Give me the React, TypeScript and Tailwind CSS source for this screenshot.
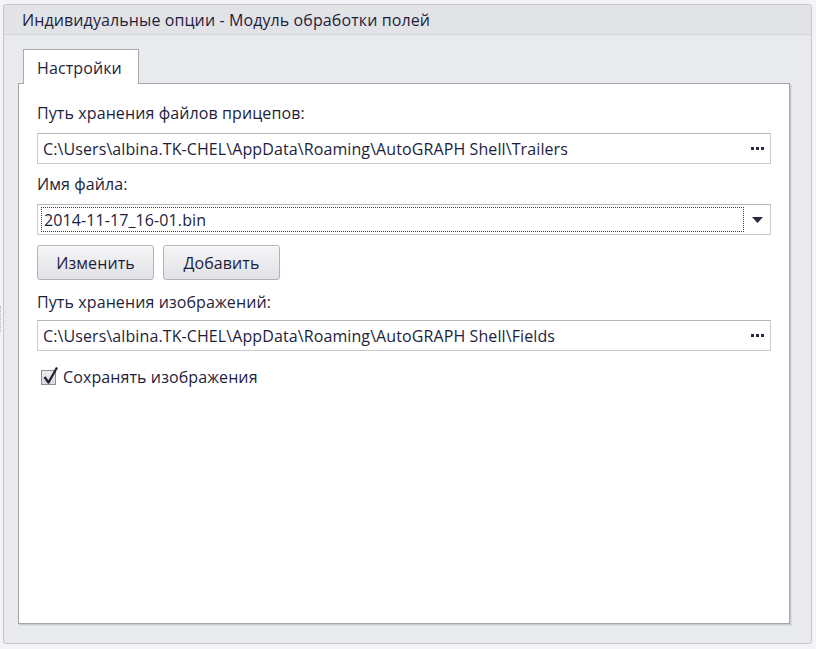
import React from "react";

const font = { fontFamily: '"Open Sans", "Noto Sans", sans-serif' };

function PathField({ value }: { value: string }) {
  return (
    <div className="flex items-center h-[31px] w-[734px] border border-[#c9cace] border-t-[#b4b5ba] bg-white pl-[5px] pr-[6px]">
      <span className="flex-1 truncate">{value}</span>
      <span className="flex gap-[2px] items-center">
        <span className="w-[3px] h-[3px] bg-[#2a2a40]" />
        <span className="w-[3px] h-[3px] bg-[#2a2a40]" />
        <span className="w-[3px] h-[3px] bg-[#2a2a40]" />
      </span>
    </div>
  );
}

function Button({ children }: { children: React.ReactNode }) {
  return (
    <button className="h-[35px] w-[117px] rounded-[3px] border border-[#b2b3b8] bg-gradient-to-b from-[#f5f5f7] to-[#e1e2e6] text-[#1e1e3c] shadow-[inset_0_1px_0_#ffffff]">
      {children}
    </button>
  );
}

export default function App() {
  return (
    <div className="relative w-[816px] h-[649px] bg-[#f4f4f6] pt-[4px] pl-[3px] text-[16px] tracking-[0.1px] text-[#1e1e3c]" style={font}>
      {/* splitter grip */}
      <div className="absolute left-0 top-[306px] h-[26px] w-[2px] border-l border-dotted border-[#b8b9be]" />

      <div className="w-[809px] h-[640px] rounded-[3px] border border-[#c6c7cc] bg-[#e9eaee] flex flex-col">
        {/* Header */}
        <div className="h-[30px] bg-[#e2e3e7] border-b border-[#d6d7db] flex items-center pl-[18px] rounded-t-[3px]">
          Индивидуальные опции - Модуль обработки полей
        </div>

        <div className="pl-[14px] pt-[14px] flex flex-col">
          {/* Tab */}
          <div className="relative z-10 -mb-px ml-[5px] w-[116px] h-[35px] border border-b-0 border-[#a8a9af] bg-white flex items-center pl-[13px] pt-[2px]">
            Настройки
          </div>

          {/* Page */}
          <div className="w-[772px] h-[541px] border border-[#a4a5ab] bg-white shadow-[1px_1px_0_#c9cace,2px_2px_0_#dcdde1] pl-[18px] pt-[16px] flex flex-col">
            <div className="h-[26px] flex items-center">Путь хранения файлов прицепов:</div>
            <div className="mt-[7px]">
              <PathField value="C:\Users\albina.TK-CHEL\AppData\Roaming\AutoGRAPH Shell\Trailers" />
            </div>

            <div className="mt-[7px] h-[26px] flex items-center">Имя файла:</div>
            <div className="mt-[7px] flex items-center h-[31px] w-[734px] border border-[#c9cace] border-t-[#b4b5ba] bg-white pl-[3px] pr-[7px]">
              <div className="flex-1 h-[25px] border border-dotted border-[#3a3a3a] flex items-center pl-[2px] mr-[8px]">
                2014-11-17_16-01.bin
              </div>
              <svg width="11" height="6" viewBox="0 0 11 6">
                <path d="M0 0 H11 L5.5 6 Z" fill="#2a2a40" />
              </svg>
            </div>

            <div className="mt-[10px] flex gap-[9px]">
              <Button>Изменить</Button>
              <Button>Добавить</Button>
            </div>

            <div className="mt-[9px] h-[26px] flex items-center">Путь хранения изображений:</div>
            <div className="mt-[5px]">
              <PathField value="C:\Users\albina.TK-CHEL\AppData\Roaming\AutoGRAPH Shell\Fields" />
            </div>

            <div className="mt-[13px] h-[26px] flex items-center gap-[7px] pl-[4px]">
              <div className="w-[15px] h-[15px] border border-[#8e8f95] bg-gradient-to-b from-[#ececee] to-[#d9dadf] relative">
                <svg className="absolute -top-[5px] left-[0px]" width="17" height="19" viewBox="0 0 17 19">
                  <path d="M2.5 11 L6.5 16.5 L15 1.5" stroke="#222233" strokeWidth="2.3" fill="none" strokeLinejoin="round" />
                </svg>
              </div>
              <span>Сохранять изображения</span>
            </div>
          </div>
        </div>
      </div>
    </div>
  );
}
